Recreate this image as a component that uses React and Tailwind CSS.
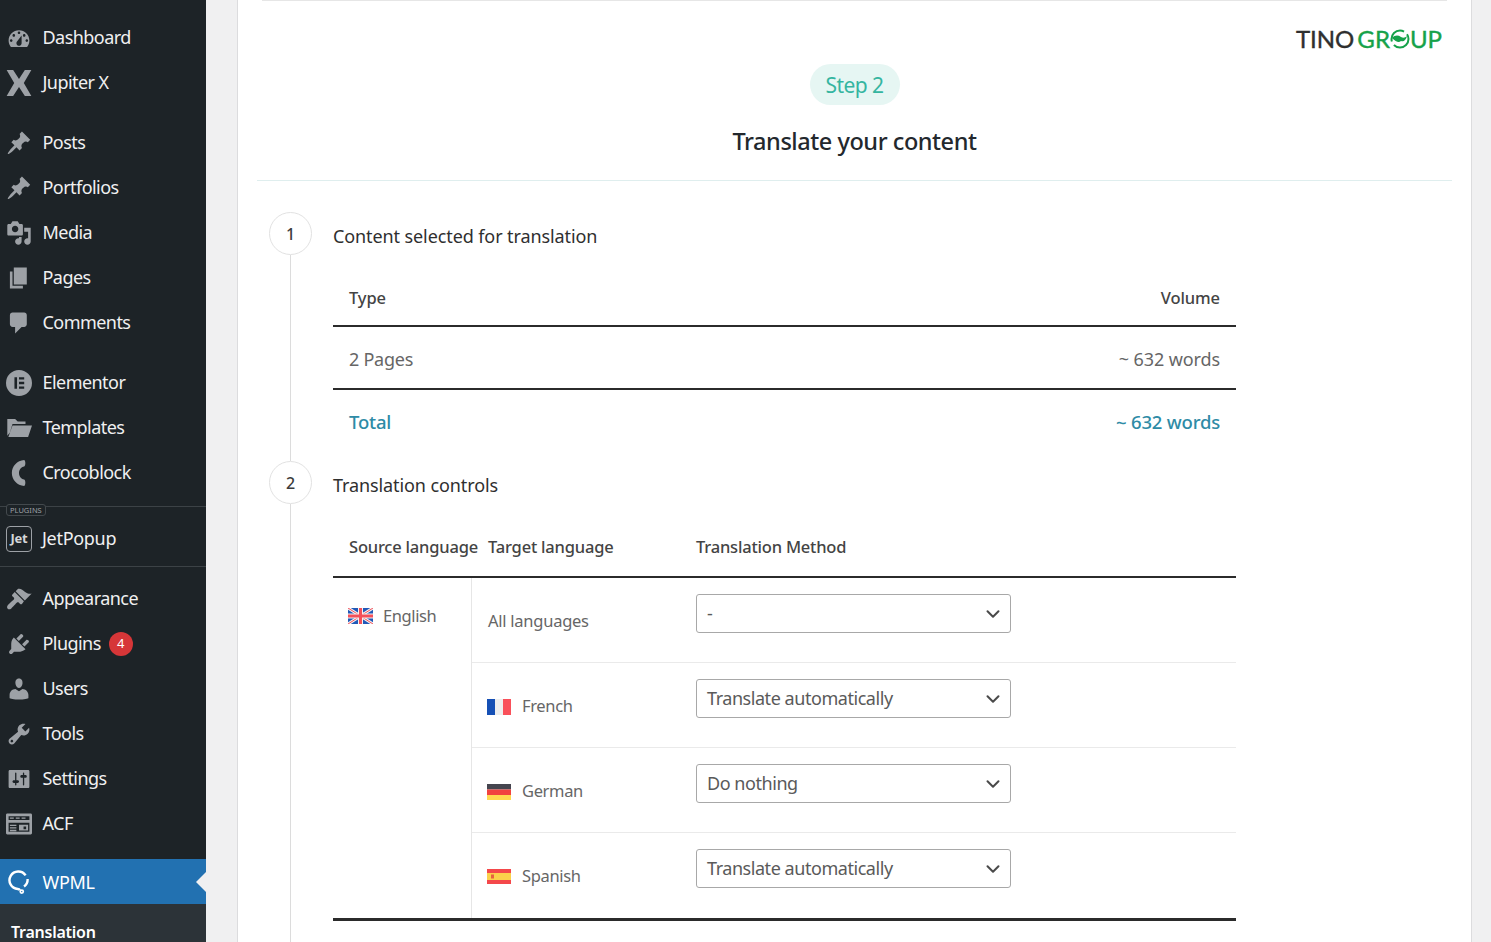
import React from "react";
import { ChevronDown } from "lucide-react";

const ICONS = {
  dashboard: <path d="M3.760 17h12.480c1.100-1.370 1.760-3.110 1.760-5 0-4.420-3.580-8-8-8s-8 3.580-8 8c0 1.890.66 3.630 1.760 5zM10 5c.55 0 1 .45 1 1s-.45 1-1 1-1-.45-1-1 .45-1 1-1zM6 7c.55 0 1 .45 1 1s-.45 1-1 1-1-.45-1-1 .45-1 1-1zm8 0c.55 0 1 .45 1 1s-.45 1-1 1-1-.45-1-1 .45-1 1-1zm-5.370 5.550L12 8v6c0 1.100-.9 2-2 2s-2-.9-2-2c0-.57.24-1.080.63-1.450zM4 11c.55 0 1 .45 1 1s-.45 1-1 1-1-.45-1-1 .45-1 1-1zm12 0c.55 0 1 .45 1 1s-.45 1-1 1-1-.45-1-1 .45-1 1-1z" fillRule="evenodd" />,
  jupiter: <path d="M.5 0h5L10 7l4.500-7h5l-5.800 10 5.800 10h-5L10 13l-4.500 7h-5l5.800-10z" />,
  pin: <path d="M10.440 3.020l1.820-1.820 6.360 6.350-1.830 1.820c-1.050-.68-2.480-.57-3.410.36l-.75.75c-.92.93-1.040 2.350-.35 3.410l-1.830 1.820-2.410-2.410-2.800 2.790c-.42.42-3.380 2.710-3.800 2.290s1.860-3.390 2.280-3.810l2.790-2.790L4.100 9.360l1.830-1.820c1.050.69 2.480.57 3.400-.36l.75-.75c.93-.92 1.050-2.350.36-3.410z" />,
  media: <path d="M13 11V4c0-.55-.45-1-1-1h-1.670L9 1H5L3.670 3H2c-.55 0-1 .45-1 1v7c0 .55.45 1 1 1h10c.55 0 1-.45 1-1zM7 4.500c1.380 0 2.500 1.120 2.500 2.500S8.380 9.500 7 9.500 4.500 8.380 4.500 7 5.620 4.500 7 4.500zM14 6h5v10.500c0 1.380-1.120 2.500-2.500 2.500S14 17.880 14 16.500s1.120-2.500 2.500-2.500c.17 0 .34.02.5.05V9h-3V6zm-4 8.050V13h2v3.500c0 1.380-1.120 2.500-2.500 2.500S7 17.880 7 16.500 8.120 14 9.500 14c.17 0 .34.02.5.05z" fillRule="evenodd" />,
  pages: <path d="M6 15V2h10v13H6zm-1 1h8v2H3V5h2v11z" />,
  comments: <path d="M5 2h9c1.100 0 2 .9 2 2v7c0 1.100-.9 2-2 2h-2l-5 5v-5H5c-1.100 0-2-.9-2-2V4c0-1.100.9-2 2-2z" />,
  elementor: <path d="M10 0a10 10 0 1 0 0 20 10 10 0 0 0 0-20zM6.500 5.500h2v9h-2zm3.500 0h4v1.800h-4zm0 3.600h4v1.800h-4zm0 3.600h4v1.800h-4z" fillRule="evenodd" />,
  templates: <path d="M1 16V3h6l2 2h6v2H5L3 13.500zM1.800 17L5 8h15l-3 9z" />,
  croco: <path d="M14 0C8.500.5 4.500 4.800 4.500 10S8.500 19.500 14 20c1.200-.8 1.200-4.200 0-5-2.500-.4-4-2.500-4-5s1.500-4.600 4-5c1.200-.8 1.200-4.200 0-5z" />,
  appearance: <path d="M14.480 11.060L7.410 3.990l1.500-1.500c.5-.56 2.300-.47 3.510.32 1.210.8 1.430 1.280 2.910 2.100 1.180.64 2.450 1.260 4.450.85zm-.71.71L6.700 4.700 4.930 6.470c-.39.39-.39 1.020 0 1.410l1.060 1.060c.39.39.39 1.030 0 1.420-.6.6-3.700 3.300-4.500 4.300-.8 1-.9 2.100-.2 2.800.7.7 1.800.6 2.800-.2 1-.8 3.700-3.900 4.300-4.500.39-.39 1.030-.39 1.420 0l1.060 1.060c.39.39 1.020.39 1.410 0z" />,
  plugins: <path d="M13.110 4.360L9.870 7.600 8 5.730l3.240-3.240c.35-.34 1.050-.2 1.560.32.52.51.66 1.210.31 1.550zm-8 1.770l.91-1.120 9.010 9.010-1.190.84c-.71.71-2.630 1.160-3.820 1.160H6.140L4.900 17.260c-.59.59-1.540.59-2.120 0-.59-.58-.59-1.530 0-2.120l1.240-1.240v-3.880c0-1.130.4-3.190 1.090-3.890zm7.260 3.970l3.240-3.240c.34-.35 1.040-.21 1.550.31.52.51.66 1.210.31 1.550l-3.240 3.250z" />,
  users: <path d="M10 9.250c-2.270 0-2.730-3.440-2.730-3.440C7 4.020 7.820 2 9.970 2c2.160 0 2.980 2.020 2.710 3.810 0 0-.41 3.440-2.680 3.440zm0 2.570L12.720 10c2.390 0 4.520 2.330 4.520 4.530v2.490s-3.650 1.130-7.240 1.130c-3.650 0-7.240-1.130-7.240-1.130v-2.490c0-2.250 1.940-4.480 4.470-4.480z" />,
  tools: <path d="M16.680 9.770c-1.340 1.340-3.300 1.670-4.950.99l-5.410 6.520c-.99.99-2.590.99-3.580 0s-.99-2.590 0-3.570l6.520-5.420c-.68-1.650-.35-3.610.99-4.950 1.280-1.280 3.120-1.620 4.720-1.060l-2.890 2.890 2.820 2.820 2.860-2.870c.53 1.580.18 3.390-1.080 4.650zM3.810 16.210c.4.39 1.040.39 1.430 0 .4-.4.4-1.040 0-1.430-.39-.4-1.030-.4-1.430 0-.39.39-.39 1.030 0 1.430z" fillRule="evenodd" />,
  settings: <path d="M18 16V4c0-.55-.45-1-1-1H3c-.55 0-1 .45-1 1v12c0 .55.45 1 1 1h14c.55 0 1-.45 1-1zM8 11h1c.55 0 1 .45 1 1s-.45 1-1 1H8v1.500c0 .28-.22.5-.5.5s-.5-.22-.5-.5V13H6c-.55 0-1-.45-1-1s.45-1 1-1h1V5.500c0-.28.22-.5.5-.5s.5.22.5.5V11zm5-2h-1c-.55 0-1-.45-1-1s.45-1 1-1h1V5.500c0-.28.22-.5.5-.5s.5.22.5.5V7h1c.55 0 1 .45 1 1s-.45 1-1 1h-1v5.500c0 .28-.22.5-.5.5s-.5-.22-.5-.5V9z" fillRule="evenodd" />,
  acf: <path d="M1 2h18c.55 0 1 .45 1 1v14c0 .55-.45 1-1 1H1c-.55 0-1-.45-1-1V3c0-.55.45-1 1-1zm1 2v3h16V4zm1 1h3v1H3zm4.500 0h3v1h-3zM12 5h3v1h-3zM2 9v7h16V9zm1 1.500h5v1H3zm0 2h5v1H3zm0 2h5v1H3zm7-4h7V15h-7zm3.500 1.500V14H15.500v-2z" fillRule="evenodd" />,
  wpml: (
    <g fill="none" stroke="currentColor" strokeWidth="2">
      <path d="M15.500 4.500A7.300 7.300 0 1 0 9 15.800c1 .1 1.500.5 1.800 1" />
      <path d="M17.200 7.500a7.300 7.300 0 0 1-3 6.200" />
      <circle cx="12.300" cy="18" r="1.300" strokeWidth="1.400" />
    </g>
  ),
};

function Icon({ name, className = "w-[26px] h-[26px]" }) {
  return (
    <svg viewBox="0 0 20 20" className={className} fill="currentColor">
      {ICONS[name]}
    </svg>
  );
}

function MenuItem({ icon, label, badge }) {
  return (
    <div className="h-[45px] flex items-center text-[#f0f0f1]">
      <span className="w-[38px] pl-[6px] text-[#9da1a6] flex items-center shrink-0"><Icon name={icon} /></span>
      <span className="ml-[4.500px] text-[18px] tracking-[-0.55px]">{label}</span>
      {badge && (
        <span className="ml-[8px] w-[24px] h-[24px] rounded-full bg-[#d63638] text-white text-[13px] flex items-center justify-center">{badge}</span>
      )}
    </div>
  );
}

function Sidebar() {
  return (
    <aside className="w-[206px] shrink-0 bg-[#1d2327] h-full overflow-hidden pt-[15px]">
      <MenuItem icon="dashboard" label="Dashboard" />
      <MenuItem icon="jupiter" label="Jupiter X" />
      <div className="h-[15px]" />
      <MenuItem icon="pin" label="Posts" />
      <MenuItem icon="pin" label="Portfolios" />
      <MenuItem icon="media" label="Media" />
      <MenuItem icon="pages" label="Pages" />
      <MenuItem icon="comments" label="Comments" />
      <div className="h-[15px]" />
      <MenuItem icon="elementor" label="Elementor" />
      <MenuItem icon="templates" label="Templates" />
      <MenuItem icon="croco" label="Crocoblock" />
      <div className="h-[11px]" />
      <div className="relative h-[10px] border-t border-[#3c4246]">
        <span className="absolute left-[6px] -top-[3px] border border-[#43494d] rounded-[3px] h-[12px] px-[3px] bg-[#1d2327] text-[#9da1a6] text-[7.500px] leading-[10px]">PLUGINS</span>
      </div>
      <div className="h-[45px] flex items-center text-[#f0f0f1]">
        <span className="w-[38px] pl-[6px] shrink-0">
          <span className="w-[26px] h-[26px] border border-[#9da1a6] rounded-[4px] flex items-center justify-center text-[#d5d7d9] text-[13px] font-bold leading-none tracking-[-0.3px]">Jet</span>
        </span>
        <span className="ml-[4px] text-[18px] tracking-[-0.3px]">JetPopup</span>
      </div>
      <div className="h-[5px]" />
      <div className="h-[10px] border-t border-[#3c4246]" />
      <MenuItem icon="appearance" label="Appearance" />
      <MenuItem icon="plugins" label="Plugins" badge="4" />
      <MenuItem icon="users" label="Users" />
      <MenuItem icon="tools" label="Tools" />
      <MenuItem icon="settings" label="Settings" />
      <MenuItem icon="acf" label="ACF" />
      <div className="h-[13px]" />
      <div className="relative h-[45px] pt-[1px] bg-[#2271b1] flex items-center text-white">
        <span className="w-[38px] pl-[7px] flex items-center shrink-0"><Icon name="wpml" className="w-[24px] h-[24px]" /></span>
        <span className="ml-[4.500px] text-[18px] tracking-[-0.35px]">WPML</span>
        <span className="absolute right-0 top-[13px] border-y-[10px] border-r-[10px] border-y-transparent border-r-[#f0f0f1]" />
      </div>
      <div className="bg-[#2c3338] h-[60px] pt-[16px] pl-[11px] text-white font-semibold text-[16px] tracking-[-0.25px]">Translation</div>
    </aside>
  );
}

function Logo() {
  return (
    <div className="absolute right-[29px] top-[24px] flex items-center text-[24px] leading-[30px] font-['Lato',sans-serif] [-webkit-text-stroke:0.4px]">
      <span className="text-[#2f2f2f]">TINO</span>
      <span className="ml-[3px] text-[#16a24a]">GR</span>
      <svg viewBox="0 0 20 20" className="w-[20px] h-[20px]" fill="none">
        <circle cx="10" cy="10" r="8.500" stroke="#16a24a" strokeWidth="2" strokeDasharray="20 4" />
        <path d="M2 9c3-3 6-3 9-1 2 1 4 1 6-1-1 4-3 6-6 5-2 2-5 1-9-3z" fill="#16a24a" />
      </svg>
      <span className="text-[#16a24a]">UP</span>
    </div>
  );
}

function StepRow({ n, title, children }) {
  return (
    <div className="flex gap-[21px]">
      <div className="w-[43px] shrink-0 flex flex-col items-center">
        <div className="w-[43px] h-[43px] shrink-0 rounded-full border border-[#e2e2e2] flex items-center justify-center text-[#3c3c3c] text-[16px] font-medium">{n}</div>
        <div className="flex-1 w-px bg-[#dcdcdc]" />
      </div>
      <div className="w-[903px]">
        <h2 className="h-[46px] pt-[2px] flex items-center text-[18px] text-[#2f2f2f] tracking-[-0.1px] font-normal">{title}</h2>
        {children}
      </div>
    </div>
  );
}

function Flag({ code }) {
  if (code === "uk") {
    return (
      <svg viewBox="0 0 25 16" className="w-[25px] h-[16px] shrink-0">
        <rect width="25" height="16" fill="#2159b8" />
        <path d="M0 0l25 16M25 0L0 16" stroke="#f3f3f3" strokeWidth="3" />
        <path d="M0 0l25 16M25 0L0 16" stroke="#f4505a" strokeWidth="1" />
        <path d="M12.500 0v16M0 8h25" stroke="#f3f3f3" strokeWidth="5" />
        <path d="M12.500 0v16M0 8h25" stroke="#f4505a" strokeWidth="3" />
      </svg>
    );
  }
  if (code === "fr") {
    return (
      <svg viewBox="0 0 24 16" className="w-[24px] h-[16px] shrink-0">
        <rect width="8" height="16" fill="#1650b5" />
        <rect x="8" width="8" height="16" fill="#eeeeee" />
        <rect x="16" width="8" height="16" fill="#f9505a" />
      </svg>
    );
  }
  if (code === "de") {
    return (
      <svg viewBox="0 0 24 16" className="w-[24px] h-[16px] shrink-0">
        <rect width="24" height="5.500" fill="#45454f" />
        <rect y="5.500" width="24" height="5.500" fill="#f1433f" />
        <rect y="11" width="24" height="5" fill="#ffd950" />
      </svg>
    );
  }
  return (
    <svg viewBox="0 0 24 15" className="w-[24px] h-[15px] shrink-0">
      <rect width="24" height="15" fill="#f4484a" />
      <rect y="4" width="24" height="7" fill="#fbd14b" />
      <rect x="4" y="5.500" width="3" height="4" fill="#e8623f" />
    </svg>
  );
}

function Select({ value }) {
  return (
    <div className="w-[315px] h-[39px] border border-[#a8a8a8] rounded-[3px] bg-white flex items-center justify-between pl-[10px] pr-[6px] text-[18px] text-[#5a5a5a] tracking-[-0.45px]">
      <span>{value}</span>
      <ChevronDown className="w-[22px] h-[22px] text-[#4a4a4a]" strokeWidth={2.200} />
    </div>
  );
}

const TARGETS = [
  { flag: "fr", label: "French", value: "Translate automatically" },
  { flag: "de", label: "German", value: "Do nothing" },
  { flag: "es", label: "Spanish", value: "Translate automatically" },
];

export default function App() {
  return (
    <div className="h-[942px] w-[1491px] overflow-hidden flex bg-[#f0f0f1] font-['Noto_Sans','Open_Sans',sans-serif]">
      <Sidebar />
      <main className="ml-[31px] w-[1235px] h-full bg-white border-x border-[#dcdcde] relative">
        <div className="ml-[24px] mr-[24px] border-t border-[#e6e6e6]" />
        <Logo />
        <header className="ml-[19px] mr-[19px] h-[180px] border-b border-[#dfeeee] flex flex-col items-center pt-[63px]">
          <div className="h-[41px] w-[90px] pt-[3px] rounded-full bg-[#e6f6f3] text-[#35b5a0] text-[21px] flex items-center justify-center tracking-[-0.55px]">Step 2</div>
          <h1 className="mt-[20px] text-[23.500px] leading-[32px] font-medium text-[#23282d] tracking-[-0.45px]">Translate your content</h1>
        </header>

        <div className="ml-[31px] pt-[31px]">
          <StepRow n="1" title="Content selected for translation">
            <div className="h-[69px] pt-[14px] flex items-center justify-between px-[16px] border-b-2 border-[#2b2b2b] text-[16.500px] font-medium text-[#444] tracking-[-0.1px]">
              <span>Type</span>
              <span>Volume</span>
            </div>
            <div className="h-[63px] pt-[4px] flex items-center justify-between px-[16px] border-b-2 border-[#2b2b2b] text-[18px] text-[#666] tracking-[-0.25px]">
              <span>2 Pages</span>
              <span className="tracking-[-0.1px]">~ 632 words</span>
            </div>
            <div className="h-[71px] pb-[8px] flex items-center justify-between px-[16px] text-[18.500px] font-medium text-[#2e8ba6] tracking-[-0.2px]">
              <span>Total</span>
              <span>~ 632 words</span>
            </div>
          </StepRow>

          <StepRow n="2" title="Translation controls">
            <div className="mt-[16px] h-[55px] pb-[5px] flex items-center border-b-2 border-[#2b2b2b] text-[16.500px] font-medium text-[#444]">
              <span className="w-[155px] pl-[16px] tracking-[-0.2px] whitespace-nowrap">Source language</span>
              <span className="w-[208px] tracking-[-0.2px]">Target language</span>
              <span className="tracking-[-0.2px]">Translation Method</span>
            </div>
            <div className="flex border-b-[3px] border-[#2b2b2b]">
              <div className="w-[139px] shrink-0 border-r border-[#e6e6e6] pl-[15px] pt-[28px]">
                <div className="flex items-center gap-[10px] text-[16.500px] text-[#666] leading-[20px] tracking-[-0.4px]">
                  <Flag code="uk" />
                  <span>English</span>
                </div>
              </div>
              <div className="flex-1 min-w-0">
                <div className="h-[85px] border-b border-[#eaeaea] flex pl-[16px]">
                  <div className="w-[208px] pt-[31px] text-[16.500px] text-[#666] leading-[24px] tracking-[-0.25px]">All languages</div>
                  <div className="pt-[16px]"><Select value="-" /></div>
                </div>
                {TARGETS.map((t, i) => (
                  <div key={t.label} className={`h-[85px] flex pl-[15px] ${i < 2 ? "border-b border-[#eaeaea]" : ""}`}>
                    <div className="w-[209px] pt-[31px] flex items-start gap-[11px] text-[16.500px] text-[#666] leading-[24px] tracking-[-0.35px]">
                      <span className="pt-[5px]"><Flag code={t.flag} /></span>
                      <span>{t.label}</span>
                    </div>
                    <div className="pt-[16px]"><Select value={t.value} /></div>
                  </div>
                ))}
              </div>
            </div>
            <div className="h-[60px]" />
          </StepRow>
        </div>
      </main>
    </div>
  );
}
